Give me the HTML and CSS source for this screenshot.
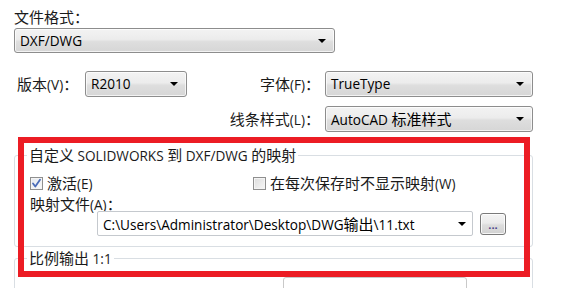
FILE: index.html
```html
<!DOCTYPE html>
<html lang="zh-CN">
<head>
<meta charset="utf-8">
<title>DXF/DWG 选项</title>
<link rel="stylesheet" href="styles.css">
</head>
<body>
<div class="dlg">
  <div class="lbl top-lbl"><span class="zh">文件格式：</span></div>
  <div class="combo combo-format">DXF/DWG</div>

  <div class="row row-ver">
    <div class="lbl lbl-ver"><span class="zh">版本</span>(V)<span class="zh">：</span></div>
    <div class="combo combo-ver">R2010</div>
    <div class="lbl lbl-right"><span class="zh">字体</span>(F)<span class="zh">：</span></div>
    <div class="combo combo-wide">TrueType</div>
  </div>

  <div class="row row-line">
    <div class="lbl lbl-right"><span class="zh">线条样式</span>(L)<span class="zh">：</span></div>
    <div class="combo combo-wide">AutoCAD <span class="zh">标准样式</span></div>
  </div>

  <fieldset class="group group-map">
    <legend class="gtitle"><span class="zh">自定义</span> SOLIDWORKS <span class="zh">到</span> DXF/DWG <span class="zh">的映射</span></legend>
    <div class="checks">
      <label class="chk">
        <span class="box checked">
          <svg width="11" height="11" viewBox="0 0 11 11"><path d="M2 5.5 L4.3 8.5 L9 1.8" fill="none" stroke="#4a6cb8" stroke-width="1.8" stroke-linejoin="round" stroke-linecap="round"/></svg>
        </span>
        <span><span class="zh">激活</span>(E)</span>
      </label>
      <label class="chk">
        <span class="box"></span>
        <span><span class="zh">在每次保存时不显示映射</span>(W)</span>
      </label>
    </div>
    <div class="lbl map-lbl"><span class="zh">映射文件</span>(A)<span class="zh">：</span></div>
    <div class="path-row">
      <div class="path-combo">C:\Users\Administrator\Desktop\DWG<span class="zh">输出</span>\11.txt</div>
      <div class="btn">...</div>
    </div>
  </fieldset>

  <fieldset class="group group-scale">
    <legend class="gtitle"><span class="zh">比例输出</span> 1:1</legend>
    <div class="stub"></div>
  </fieldset>

  <div class="highlight"></div>
</div>
</body>
</html>
```

FILE: styles.css
```css
html, body {
  margin: 0;
  padding: 0;
  background: #ffffff;
  overflow: hidden;
}

.dlg {
  position: relative;
  width: 568px;
  height: 288px;
  overflow: hidden;
  padding: 8px 0 0 14px;
  box-sizing: border-box;
  font-family: "Open Sans", "Noto Sans CJK SC", sans-serif;
  font-size: 13.6px;
  color: #1a1a1a;
}

.zh {
  font-family: "Noto Sans CJK SC", sans-serif;
  font-size: 15px;
}

.lbl {
  height: 18px;
  line-height: 18px;
  white-space: nowrap;
}

.combo {
  position: relative;
  box-sizing: border-box;
  height: 25px;
  line-height: 23px;
  padding-left: 5px;
  border: 1px solid #8d8d8d;
  border-radius: 3px;
  background: linear-gradient(#f3f3f3 0%, #ececec 45%, #dedede 55%, #d6d6d6 100%);
  box-shadow: inset 0 0 0 1px rgba(255,255,255,0.7);
  white-space: nowrap;
  color: #000;
}

.combo::after,
.path-combo::after {
  content: "";
  position: absolute;
  right: 8px;
  top: 50%;
  margin-top: -2px;
  border-left: 4px solid transparent;
  border-right: 4px solid transparent;
  border-top: 4px solid #000;
}

.combo-format {
  margin-top: 2px;
  width: 321px;
}

.row {
  display: flex;
  align-items: center;
  width: 519px;
  height: 26px;
}

.row-ver {
  margin-top: 18px;
}

.row-line {
  margin-top: 9px;
}

.lbl-ver {
  margin-left: 3px;
  width: 68px;
}

.combo-ver {
  width: 102px;
  height: 26px;
  line-height: 24px;
}

.lbl-right {
  flex: 1;
  text-align: right;
  padding-right: 5px;
}

.combo-wide {
  width: 208px;
  height: 26px;
  line-height: 24px;
}

.group {
  margin: 0;
  width: 519px;
  box-sizing: border-box;
  border: 1px solid #d9dee3;
  border-radius: 3px;
  padding: 0 0 0 15px;
  min-width: 0;
}

.group-map {
  margin-top: 14px;
  padding-bottom: 10px;
}

.gtitle {
  padding: 0 2px;
  margin-left: -3px;
  height: 18px;
  line-height: 18px;
  white-space: nowrap;
}

.checks {
  display: grid;
  grid-template-columns: 223px 1fr;
  margin-top: 10px;
  height: 18px;
}

.chk {
  display: flex;
  align-items: center;
  gap: 4px;
  line-height: 18px;
  white-space: nowrap;
}

.box {
  width: 13px;
  height: 13px;
  box-sizing: border-box;
  border: 1px solid #8f8f8f;
  background: linear-gradient(135deg, #dcdcdc, #f7f7f7);
  box-shadow: inset 0 0 0 1px #f4f4f4;
  display: flex;
  align-items: center;
  justify-content: center;
}

.box.checked {
  background: linear-gradient(135deg, #e4e8ee, #fafafa);
}

.box svg {
  display: block;
}

.map-lbl {
  margin-top: 3px;
}

.path-row {
  display: flex;
  align-items: center;
  gap: 7px;
  margin-left: 67px;
  margin-top: -2px;
}

.path-combo {
  position: relative;
  box-sizing: border-box;
  width: 376px;
  height: 25px;
  line-height: 23px;
  padding-left: 5px;
  border: 1px solid #c5c9ce;
  border-radius: 2px;
  background: #fff;
  white-space: nowrap;
  color: #000;
}

.path-combo::after {
  right: 6px;
}

.btn {
  box-sizing: border-box;
  width: 26px;
  height: 22px;
  border: 1px solid #7a7a7a;
  border-radius: 3px;
  background: linear-gradient(#f4f4f4 0%, #ebebeb 45%, #dddddd 55%, #d2d2d2 100%);
  box-shadow: inset 0 0 0 1px rgba(255,255,255,0.8);
  text-align: center;
  line-height: 22px;
  font-size: 11px;
  font-weight: bold;
  color: #4b3f8a;
}

.group-scale {
  margin-top: 2px;
  height: 60px;
}

.stub {
  margin-top: 10px;
  margin-left: 253px;
  width: 182px;
  height: 20px;
  border: 1px solid #c9c9c9;
  border-radius: 3px;
}

.highlight {
  position: absolute;
  left: 18px;
  top: 137px;
  width: 512px;
  height: 140px;
  box-sizing: border-box;
  border: 6px solid #ec1c24;
  pointer-events: none;
}
```
